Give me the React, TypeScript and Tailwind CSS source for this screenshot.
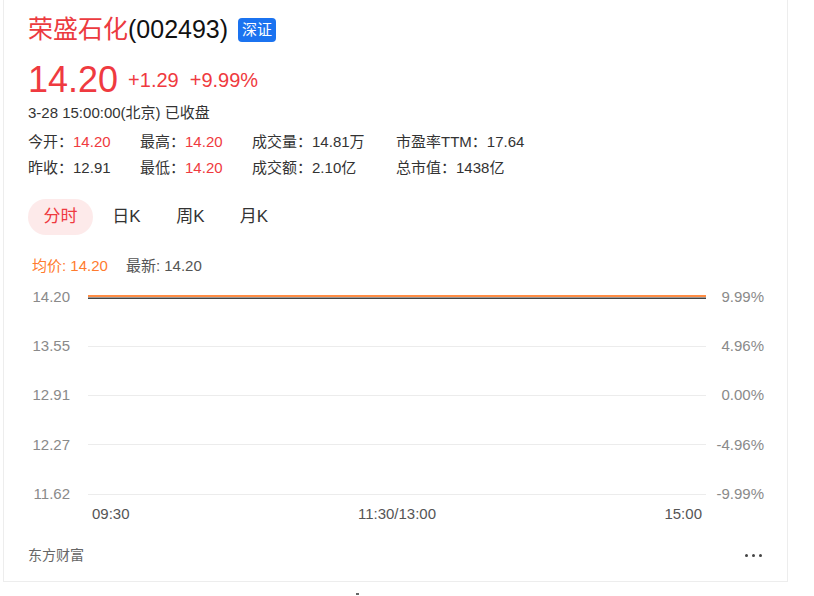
import React from 'react'

const font = { fontFamily: '"Liberation Sans", Arial, "Noto Sans CJK SC", sans-serif' }

const stats = [
  [
    { label: '今开', value: '14.20', red: true },
    { label: '最高', value: '14.20', red: true },
    { label: '成交量', value: '14.81万' },
    { label: '市盈率TTM', value: '17.64' },
  ],
  [
    { label: '昨收', value: '12.91' },
    { label: '最低', value: '14.20', red: true },
    { label: '成交额', value: '2.10亿' },
    { label: '总市值', value: '1438亿' },
  ],
]

const colWidths = ['w-[112px]', 'w-[112px]', 'w-[144px]', 'w-[150px]']

const rows = [
  { left: '14.20', right: '9.99%' },
  { left: '13.55', right: '4.96%' },
  { left: '12.91', right: '0.00%' },
  { left: '12.27', right: '-4.96%' },
  { left: '11.62', right: '-9.99%' },
]

export default function App() {
  return (
    <div className="w-[814px] h-[596px] bg-white overflow-hidden" style={font}>
      <div className="ml-[3px] w-[785px] border-l border-r border-b border-[#ededed] pl-[24px] pr-[23px] pt-[14px] pb-[16px]">
        {/* Title */}
        <div className="flex items-center h-[32px]">
          <span className="text-[25px] text-[#ec3b3f]">荣盛石化</span>
          <span className="text-[25px] text-[#111]">(002493)</span>
          <span className="ml-[10px] bg-[#1b73f0] text-white text-[15px] leading-[24px] px-[4px] rounded-[4px]">深证</span>
        </div>

        {/* Price */}
        <div className="flex items-center h-[44px] mt-[12px] text-[#ef3a40]">
          <span className="text-[36px] leading-[44px]">14.20</span>
          <span className="ml-[10px] text-[20px]">+1.29</span>
          <span className="ml-[11px] text-[20px]">+9.99%</span>
        </div>
        <div className="text-[15px] leading-[20px] text-[#333] mt-px">3-28 15:00:00(北京) 已收盘</div>

        {/* Stats */}
        <div className="mt-[6px]">
          {stats.map((row, i) => (
            <div key={i} className="flex h-[26px] items-center text-[15px] text-[#333]">
              {row.map((s, j) => (
                <div key={j} className={colWidths[j]}>
                  {s.label}：<span className={s.red ? 'text-[#ef3a40]' : ''}>{s.value}</span>
                </div>
              ))}
            </div>
          ))}
        </div>

        {/* Tabs */}
        <div className="flex items-center mt-[18px] text-[17px] text-[#333]">
          <div className="w-[65px] h-[36px] rounded-full bg-[#fdeaea] text-[#ef3a40] flex items-center justify-center">分时</div>
          <div className="w-[65px] h-[36px] flex items-center justify-center ml-px">日K</div>
          <div className="w-[63px] h-[36px] flex items-center justify-center">周K</div>
          <div className="w-[64px] h-[36px] flex items-center justify-center">月K</div>
        </div>

        {/* Legend */}
        <div className="flex items-center h-[20px] mt-[21px] pl-[4px] text-[15px]">
          <span className="text-[#ff7b2e]">均价: 14.20</span>
          <span className="ml-[18px] text-[#555]">最新: 14.20</span>
        </div>

        {/* Chart */}
        <div className="mt-[11px]">
          <div className="flex flex-col gap-[29.25px]">
            {rows.map((r, i) => (
              <div key={i} className="flex items-center h-[20px] text-[15px] text-[#8a8a8a]">
                <div className="w-[42px] text-right">{r.left}</div>
                <div className="flex-1 ml-[18px] flex flex-col">
                  {i === 0 ? (
                    <>
                      <div className="h-[2px] bg-[#ff8d45]" />
                      <div className="h-[1px] bg-[#9a9a9a]" />
                      <div className="h-[1px] bg-[#444]" />
                    </>
                  ) : (
                    <div className="h-[1px] bg-[#ececec]" />
                  )}
                </div>
                <div className="w-[58px] text-right">{r.right}</div>
              </div>
            ))}
          </div>
          <div className="flex justify-between h-[20px] items-center ml-[60px] mr-[58px] px-[4px] text-[15px] text-[#555]">
            <span>09:30</span>
            <span>11:30/13:00</span>
            <span>15:00</span>
          </div>
        </div>

        {/* Footer */}
        <div className="flex items-center justify-between h-[20px] mt-[21px] text-[14px] text-[#666]">
          <span>东方财富</span>
          <div className="flex gap-[4px] mr-[2px]">
            <div className="w-[3px] h-[3px] rounded-full bg-[#444]" />
            <div className="w-[3px] h-[3px] rounded-full bg-[#444]" />
            <div className="w-[3px] h-[3px] rounded-full bg-[#444]" />
          </div>
        </div>
      </div>
      <div className="ml-[356px] mt-[11px] w-[3px] h-[2px] bg-[#666]" />
    </div>
  )
}
